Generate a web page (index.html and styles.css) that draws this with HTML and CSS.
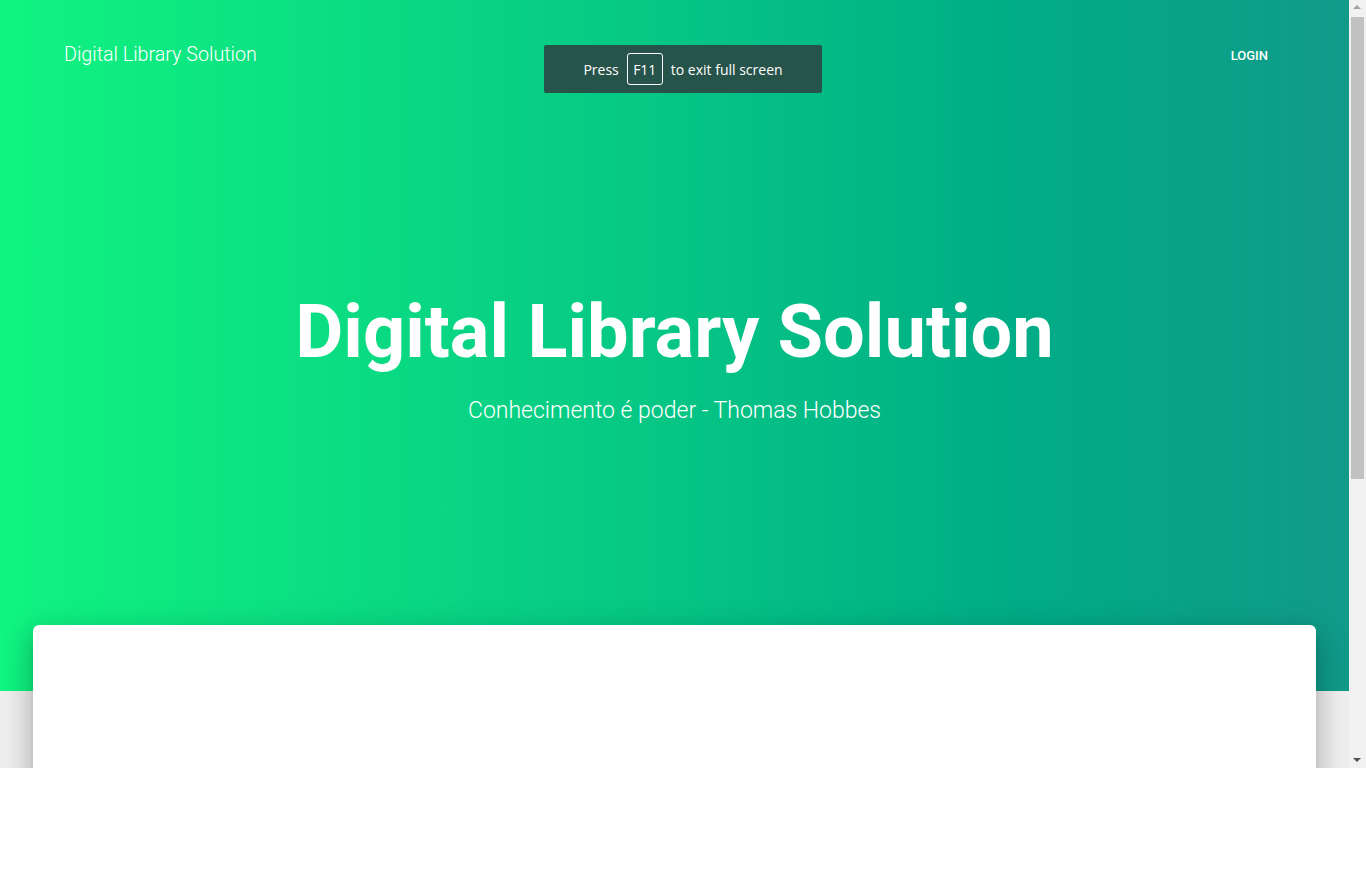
FILE: index.html
```html
<!DOCTYPE html>
<html lang="pt">
<head>
<meta charset="utf-8">
<title>Digital Library Solution</title>
<link rel="stylesheet" href="styles.css">
</head>
<body>
<div class="viewport">
  <div class="main">
    <header class="header">
      <nav class="nav">
        <a class="brand">Digital Library Solution</a>
        <a class="login">Login</a>
      </nav>
      <div class="hero">
        <h1 class="title">Digital Library Solution</h1>
        <h4 class="subtitle">Conhecimento é poder - Thomas Hobbes</h4>
      </div>
    </header>
    <section class="content">
      <div class="card"></div>
    </section>
    <div class="toast">Press <span class="key">F11</span> to exit full screen</div>
  </div>
  <div class="scrollbar">
    <div class="arrow up"></div>
    <div class="thumb"></div>
    <div class="spacer"></div>
    <div class="arrow down"></div>
  </div>
</div>
</body>
</html>
```
FILE: styles.css
```css
* { box-sizing: border-box; }
html, body { margin: 0; padding: 0; background: #ffffff; }
body { font-family: Roboto, "Noto Sans", sans-serif; color: #fff; }

.viewport {
  width: 1366px;
  height: 768px;
  display: flex;
  overflow: hidden;
}
.main {
  position: relative;
  width: 1349px;
  height: 768px;
  overflow: hidden;
  background: #eeeeee;
}
.header {
  height: 691px;
  background: linear-gradient(to right, #10f480 0%, #08cf84 40%, #00ad86 75%, #119a8a 100%);
  display: flex;
  flex-direction: column;
}
.nav {
  display: flex;
  justify-content: space-between;
  align-items: flex-start;
  padding: 43px 81px 0 64px;
}
.brand {
  font-size: 19.7px;
  font-weight: 300;
  line-height: 24px;
  color: #fff;
}
.login {
  font-size: 13px;
  font-weight: 500;
  line-height: 24px;
  margin-top: 1px;
  text-transform: uppercase;
  color: #fff;
}
.hero {
  margin-top: 221px;
  text-align: center;
}
.title {
  margin: 0;
  font-size: 74px;
  font-weight: 700;
  line-height: 86px;
}
.subtitle {
  margin: 21px 0 0;
  font-size: 23px;
  font-weight: 300;
  line-height: 30px;
}
.content {
  padding: 0 33px;
}
.card {
  position: relative;
  margin-top: -66px;
  height: 400px;
  background: #fff;
  border-radius: 6px;
  box-shadow: 0 16px 24px 2px rgba(0,0,0,.14), 0 6px 30px 5px rgba(0,0,0,.12), 0 8px 10px -5px rgba(0,0,0,.2);
}
.toast {
  position: absolute;
  left: 544px;
  top: 45px;
  width: 278px;
  height: 48px;
  background: #27544a;
  border-radius: 2px;
  display: flex;
  align-items: center;
  justify-content: center;
  gap: 8px;
  font-family: "Open Sans", "Noto Sans", sans-serif;
  font-size: 14px;
  color: #fff;
}
.key {
  display: inline-flex;
  align-items: center;
  justify-content: center;
  width: 36px;
  height: 32px;
  border: 1px solid #ffffff;
  border-radius: 3px;
}
.scrollbar {
  width: 17px;
  height: 768px;
  background: #f1f1f1;
  display: flex;
  flex-direction: column;
  align-items: center;
}
.arrow {
  width: 17px;
  height: 17px;
  position: relative;
  flex: none;
}
.arrow::after {
  content: "";
  position: absolute;
  left: 4px;
  width: 0;
  height: 0;
  border-left: 4px solid transparent;
  border-right: 4px solid transparent;
}
.arrow.up::after { top: 5px; border-bottom: 4px solid #a3a3a3; }
.arrow.down::after { top: 7px; border-top: 4px solid #505050; }
.thumb {
  width: 13px;
  height: 462px;
  background: #c1c1c1;
  flex: none;
}
.spacer { flex: 1; }
```
